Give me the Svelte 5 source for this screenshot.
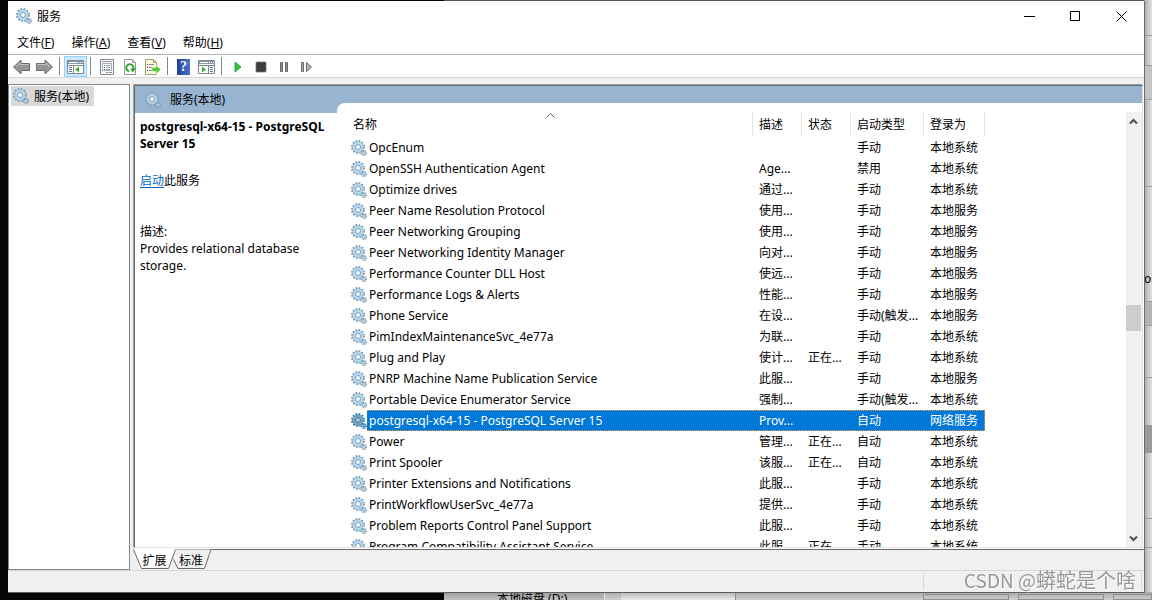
<script>
const menus = [
    { label: '文件', key: 'F' },
    { label: '操作', key: 'A' },
    { label: '查看', key: 'V' },
    { label: '帮助', key: 'H' },
];

const columns = ['描述', '状态', '启动类型', '登录为'];

const services = [
    { name: 'OpcEnum', desc: '', status: '', startup: '手动', logon: '本地系统' },
    { name: 'OpenSSH Authentication Agent', desc: 'Age...', status: '', startup: '禁用', logon: '本地系统' },
    { name: 'Optimize drives', desc: '通过...', status: '', startup: '手动', logon: '本地系统' },
    { name: 'Peer Name Resolution Protocol', desc: '使用...', status: '', startup: '手动', logon: '本地服务' },
    { name: 'Peer Networking Grouping', desc: '使用...', status: '', startup: '手动', logon: '本地服务' },
    { name: 'Peer Networking Identity Manager', desc: '向对...', status: '', startup: '手动', logon: '本地服务' },
    { name: 'Performance Counter DLL Host', desc: '使远...', status: '', startup: '手动', logon: '本地服务' },
    { name: 'Performance Logs & Alerts', desc: '性能...', status: '', startup: '手动', logon: '本地服务' },
    { name: 'Phone Service', desc: '在设...', status: '', startup: '手动(触发...', logon: '本地服务' },
    { name: 'PimIndexMaintenanceSvc_4e77a', desc: '为联...', status: '', startup: '手动', logon: '本地系统' },
    { name: 'Plug and Play', desc: '使计...', status: '正在...', startup: '手动', logon: '本地系统' },
    { name: 'PNRP Machine Name Publication Service', desc: '此服...', status: '', startup: '手动', logon: '本地服务' },
    { name: 'Portable Device Enumerator Service', desc: '强制...', status: '', startup: '手动(触发...', logon: '本地系统' },
    { name: 'postgresql-x64-15 - PostgreSQL Server 15', desc: 'Prov...', status: '', startup: '自动', logon: '网络服务' },
    { name: 'Power', desc: '管理...', status: '正在...', startup: '自动', logon: '本地系统' },
    { name: 'Print Spooler', desc: '该服...', status: '正在...', startup: '自动', logon: '本地系统' },
    { name: 'Printer Extensions and Notifications', desc: '此服...', status: '', startup: '手动', logon: '本地系统' },
    { name: 'PrintWorkflowUserSvc_4e77a', desc: '提供...', status: '', startup: '手动', logon: '本地系统' },
    { name: 'Problem Reports Control Panel Support', desc: '此服...', status: '', startup: '手动', logon: '本地系统' },
    { name: 'Program Compatibility Assistant Service', desc: '此服...', status: '正在...', startup: '手动', logon: '本地系统' },
];

let selected = $state(13);
let tab = $state('扩展');

// share of the scroll track above and below the thumb
const above = 175;
const below = 199;
</script>

{#snippet gears(faded)}
    <svg class="gears" class:faded width="16" height="16" viewBox="0 0 16 16" aria-hidden="true">
        <circle cx="7" cy="7" r="6" fill="none" stroke="#6f95b1" stroke-width="2" stroke-dasharray="1.6 1.54" />
        <circle cx="7" cy="7" r="4" fill="#fff" stroke="#b9d9ee" stroke-width="3" />
        <circle cx="7" cy="7" r="5.4" fill="none" stroke="#8fb0c8" stroke-width=".7" />
        <circle cx="7" cy="7" r="2.5" fill="#fff" stroke="#6d8fac" stroke-width=".9" />
        <circle cx="13" cy="13" r="2.4" fill="none" stroke="#6f93ae" stroke-width="1.3" stroke-dasharray="1 .88" />
        <circle cx="13" cy="13" r="1.4" fill="#e4f0f8" stroke="#8fb2cb" stroke-width="1.1" />
    </svg>
{/snippet}

{#snippet arrow(flip)}
    <svg width="17" height="16" viewBox="0 0 17 16" aria-hidden="true">
        <path
            d="M.5 8 8 1V4.500h8.500v7H8V15z"
            transform={flip ? 'matrix(-1 0 0 1 17 0)' : undefined}
            fill="#959595" stroke="#6c6c6c" stroke-linejoin="round" />
        <path
            d="M3 8 7 4V5.500h8.500"
            transform={flip ? 'matrix(-1 0 0 1 17 0)' : undefined}
            fill="none" stroke="#c4c4c4" />
    </svg>
{/snippet}

{#snippet panes(right)}
    <svg width="17" height="16" viewBox="0 0 17 16" aria-hidden="true">
        <path d="M.5 1.5h16v13H.5z" fill="#fff" stroke="#7d8893" />
        <path d="M1 2h15v3H1z" fill="#8b98a6" />
        <path d="M2 3.5h8M11 3.5h1M13 3.5h1M15 3.5h1" stroke="#fff" />
        <path d="M1 6.5h15" stroke="#7d8893" />
        {#if right}
            <path d="M10.5 7v7" stroke="#7d8893" />
            <path d="M12 8.5h3M12 10.5h3M12 12.5h3" stroke="#5a7ca8" />
            <path d="M4 7.5v6L8 10.5z" fill="#3ab52c" />
        {:else}
            <path d="M6.5 7v7" stroke="#7d8893" />
            <path d="M2 8.5h3M2 10.5h3M2 12.5h3" stroke="#5a7ca8" />
            <path d="M12 7.5v6L8 10.5z" fill="#3ab52c" />
        {/if}
    </svg>
{/snippet}

<div class="desktop">
    <!-- windows lying behind the console -->
    <div class="behind" aria-hidden="true">
        <div class="side">
            <i class="s1"></i><i class="s2"></i><i class="s3"></i><i class="s4"></i>
            <i class="s5"><b>os</b></i><i class="s6"></i><i class="s7"></i><i class="s8"></i>
            <i class="s9"></i><i class="s10"></i><i class="s11"></i>
        </div>
        <div class="foot">
            <span class="drive">本地磁盘 (D:)</span>
            <span class="edge"></span>
            <span class="pale"></span>
            <span class="boxes"><i></i><i></i><i></i></span>
        </div>
    </div>

    <main class="window">
        <header class="titlebar">
            {@render gears(false)}
            <h1>服务</h1>
            <div class="controls">
                <button aria-label="最小化"><svg width="11" height="11"><path d="M0 5.5h11" stroke="#000" /></svg></button>
                <button aria-label="最大化"><svg width="11" height="11"><path d="M.5.5h9v9h-9z" fill="none" stroke="#000" /></svg></button>
                <button aria-label="关闭"><svg width="11" height="11"><path d="M.5.5l10 10M10.500.5l-10 10" stroke="#000" /></svg></button>
            </div>
        </header>

        <nav class="menubar">
            {#each menus as m}
                <button>{m.label}(<u>{m.key}</u>)</button>
            {/each}
        </nav>

        <div class="toolbar" role="toolbar">
            <button aria-label="后退">{@render arrow(false)}</button>
            <button aria-label="前进">{@render arrow(true)}</button>
            <span class="sep"></span>
            <button class="on" aria-label="显示/隐藏控制台树">{@render panes(false)}</button>
            <span class="sep"></span>
            <button aria-label="属性">
                <svg width="16" height="16" viewBox="0 0 16 16">
                    <path d="M1.500.5h13v15h-13z" fill="#fafafa" stroke="#82878c" />
                    <path d="M3 2.500h10" stroke="#8b98a6" />
                    <path d="M3.500 4.500h9v7h-9z" fill="#fff" stroke="#a3a9af" />
                    <path d="M5 6.500h1M5 8.500h1M5 10.500h1" stroke="#3f74b5" />
                    <path d="M7 6.500h4M7 8.500h4M7 10.500h4" stroke="#9aa0a6" />
                    <path d="M7 13.500h2M10 13.500h3" stroke="#82878c" />
                </svg>
            </button>
            <button aria-label="刷新">
                <svg width="16" height="16" viewBox="0 0 16 16">
                    <path d="M2.500.5h8l3 3v12h-11z" fill="#fdfdfd" stroke="#979797" />
                    <path d="M10.500.5v3h3" fill="none" stroke="#979797" />
                    <path d="M7 12.300A3.600 3.600 0 1 1 11.300 10" fill="none" stroke="#2fa82f" stroke-width="2" />
                    <path d="M8 9.500h5.500L11 13.500z" fill="#2fa82f" />
                </svg>
            </button>
            <button aria-label="导出列表">
                <svg width="16" height="16" viewBox="0 0 16 16">
                    <path d="M.5.5h8l3 3v12H.5z" fill="#fdf8dc" stroke="#a39a77" />
                    <path d="M8.500.5v3h3" fill="none" stroke="#a39a77" />
                    <path d="M2 5.500h1M2 8.500h1M2 11.500h1" stroke="#444" />
                    <path d="M4 5.500h5M4 8.500h4M4 11.500h4" stroke="#8d8da8" />
                    <path d="M7 8.500h4V6l5 4.500-5 4.500v-2.500H7z" fill="#54c93b" stroke="#fff" stroke-width=".5" />
                </svg>
            </button>
            <span class="sep"></span>
            <button class="help" aria-label="帮助"><span>?</span></button>
            <button aria-label="显示/隐藏操作窗格">{@render panes(true)}</button>
            <span class="sep"></span>
            <button aria-label="启动服务">
                <svg width="16" height="16"><path d="M5 3v10l6-5z" fill="#2fc52f" stroke="#1c9c2a" stroke-width=".8" /></svg>
            </button>
            <button aria-label="停止服务">
                <svg width="16" height="16"><rect x="3" y="3" width="10" height="10" rx="1" fill="#3d3d3d" stroke="#6e6e6e" stroke-width=".8" /></svg>
            </button>
            <button aria-label="暂停服务">
                <svg width="16" height="16"><path d="M4.500 3.500h2v9h-2zM9.500 3.500h2v9h-2z" fill="#8c8c8c" stroke="#6a6a6a" /></svg>
            </button>
            <button aria-label="重启动服务">
                <svg width="16" height="16"><path d="M2.500 3.500h2v9h-2zM7.500 3.500v9l5-4.500z" fill="#b4b4b4" stroke="#6a6a6a" /></svg>
            </button>
        </div>

        <div class="body">
            <aside class="tree">
                <button class="node">{@render gears(false)}<span>服务(本地)</span></button>
            </aside>

            <section class="right">
                <div class="pane">
                    <div class="info">
                        <div class="info-head">{@render gears(true)}<h2>服务(本地)</h2></div>
                        <div class="info-body">
                            <h3>postgresql-x64-15 - PostgreSQL Server 15</h3>
                            <p class="action"><a href="#start">启动</a>此服务</p>
                            <p>描述:</p>
                            <p>Provides relational database storage.</p>
                        </div>
                    </div>

                    <div class="list">
                        <div class="scroller">
                            <table>
                                <thead>
                                    <tr>
                                        <th class="c-name">
                                            名称
                                            <svg class="sort" width="9" height="5"><path d="M.5 4.500l4-4 4 4" fill="none" stroke="#5c5c5c" /></svg>
                                        </th>
                                        {#each columns as c, i}
                                            <th class="c{i}">{c}</th>
                                        {/each}
                                    </tr>
                                </thead>
                                <tbody>
                                    {#each services as s, i}
                                        <tr class:selected={i === selected} onclick={() => selected = i}>
                                            <td class="name">
                                                <div>{@render gears(false)}<span>{s.name}</span></div>
                                            </td>
                                            <td>{s.desc}</td>
                                            <td>{s.status}</td>
                                            <td>{s.startup}</td>
                                            <td>{s.logon}</td>
                                        </tr>
                                    {/each}
                                </tbody>
                            </table>
                        </div>
                        <div class="scrollbar">
                            <button aria-label="向上滚动"><svg width="9" height="7"><path d="M1 5.500l3.500-3.500 3.500 3.500" fill="none" stroke="#505050" stroke-width="2" /></svg></button>
                            <div style="flex-grow: {above}"></div>
                            <div class="thumb"></div>
                            <div style="flex-grow: {below}"></div>
                            <button aria-label="向下滚动"><svg width="9" height="7"><path d="M1 1.500l3.500 3.500 3.500-3.500" fill="none" stroke="#505050" stroke-width="2" /></svg></button>
                        </div>
                    </div>
                </div>

                <div class="tabs">
                    <svg class="tab-shapes" width="80" height="21" viewBox="0 0 80 21" aria-hidden="true">
                        <path d="M41 10l4 9.500h26.500L78 .5H42z" fill="#f0f0f0" />
                        <path d="M40.500 10.500l4.500 9h26.500L78 .5" fill="none" stroke="#696969" />
                        <path d="M0 0l8.500 19.500h27L43 0z" fill="#fff" />
                        <path d="M.5.5l8 19h27l7-19" fill="none" stroke="#696969" />
                    </svg>
                    <button class="wide" onclick={() => tab = '扩展'} aria-pressed={tab === '扩展'}>扩展</button>
                    <button onclick={() => tab = '标准'} aria-pressed={tab === '标准'}>标准</button>
                </div>
            </section>
        </div>

        <footer class="status"><span></span></footer>
    </main>

    <div class="watermark"><span>CSDN @</span>蟒蛇是个啥</div>
</div>

<style>
    :global(body) {
        margin: 0;
        overflow: hidden;
    }

    .desktop {
        position: relative;
        display: flex;
        box-sizing: border-box;
        height: 100vh;
        padding: 1px 7px 7px 8px;
        background: #060606;
        font: 12px/17px "Noto Sans", "Noto Sans CJK SC", sans-serif;
        color: #000;
    }

    button {
        margin: 0;
        padding: 0;
        border: 0;
        background: none;
        font: inherit;
        color: inherit;
    }

    h1, h2, h3, p {
        margin: 0;
        font-size: 12px;
        font-weight: 400;
    }

    svg {
        display: block;
        flex: none;
    }

    /* background windows */
    .behind {
        position: absolute;
        inset: 0 0 0 444px;
        background: #555;
        overflow: hidden;
    }

    .side {
        position: absolute;
        inset: 0 0 0 auto;
        width: 8px;
        display: flex;
        flex-direction: column;
        background: linear-gradient(90deg, #aaa, #e2e2e2);
    }

    .side i {
        box-sizing: border-box;
        border-bottom: 1px solid #a0a0a0;
        font-style: normal;
    }

    .side b {
        font-weight: 400;
        font-size: 12px;
    }

    .s1 { height: 36px; }
    .s2 { height: 30px; }
    .s3 { height: 34px; background: #c4c4c4; }
    .s4 { height: 87px; }
    .s5 { height: 115px; padding-top: 83px; }
    .s6 { height: 24px; background: #b4b4b4; }
    .s7 { height: 52px; }
    .s8 { height: 48px; }
    .s9 { height: 27px; background: #999; }
    .s10 { height: 66px; }
    .s11 { height: 29px; }

    .foot {
        position: absolute;
        inset: auto 0 0 0;
        height: 8px;
        display: flex;
        background: linear-gradient(#9a9a9a, #c2c2c2);
        overflow: hidden;
    }

    .drive {
        width: 107px;
        padding-left: 53px;
        line-height: 14px;
        white-space: nowrap;
    }

    .edge {
        width: 16px;
        border-left: 1px solid #e6e6e6;
        background: linear-gradient(#aaa, #d0d0d0);
    }

    .pale {
        width: 114px;
        border-right: 1px solid #8a8a8a;
        background: linear-gradient(#b4b4b4, #eaeaea);
    }

    .boxes {
        flex: 1;
        display: flex;
        justify-content: flex-end;
        gap: 9px;
        padding-top: 2px;
        background: linear-gradient(#aaa, #cfcfcf);
    }

    .boxes i {
        box-sizing: border-box;
        width: 86px;
        border: 1px solid #8f8f8f;
    }

    .boxes i:last-child {
        width: 39px;
    }

    /* console window */
    .window {
        position: relative;
        flex: 1;
        min-width: 0;
        display: flex;
        flex-direction: column;
        border-right: 1px solid #6b6b6b;
        border-bottom: 1px solid #5a5f5c;
        background: #f0f0f0;
    }

    .titlebar {
        display: flex;
        align-items: center;
        gap: 5px;
        height: 30px;
        padding-left: 8px;
        background: #fff;
    }

    .controls {
        display: flex;
        margin-left: auto;
    }

    .controls button {
        display: flex;
        align-items: center;
        justify-content: center;
        width: 46px;
        height: 30px;
    }

    .menubar {
        display: flex;
        height: 23px;
        border-bottom: 1px solid #b4b4b4;
        background: #fff;
    }

    .menubar button {
        padding: 0 8px 0 9px;
    }

    .toolbar {
        display: flex;
        align-items: flex-end;
        height: 22px;
        padding-left: 2px;
        border-bottom: 1px solid #d9d9d9;
        background: #fff;
    }

    .toolbar button {
        box-sizing: border-box;
        display: flex;
        align-items: center;
        justify-content: center;
        width: 23px;
        height: 21px;
    }

    .toolbar .on {
        border: 1px solid #99d1ff;
        background: #cce8ff;
    }

    .toolbar .sep {
        width: 1px;
        height: 18px;
        margin: 0 4px 2px 3px;
        background: #868686;
    }

    .help span {
        width: 13px;
        height: 16px;
        background: linear-gradient(90deg, #1d3f94, #4a76cf);
        color: #fff;
        font: bold 14px/16px "Liberation Serif", serif;
    }

    .body {
        flex: 1;
        min-height: 0;
        display: grid;
        grid-template: minmax(0, 1fr) / 122px minmax(0, 1fr);
        column-gap: 3px;
        padding-top: 6px;
    }

    .tree {
        padding: 1px 2px;
        border: 1px solid #828790;
        background: #fff;
    }

    .node {
        display: flex;
        align-items: center;
        gap: 5px;
        height: 20px;
        padding: 0 5px 0 2px;
        background: #d9d9d9;
    }

    .right {
        display: flex;
        flex-direction: column;
        min-height: 0;
    }

    .pane {
        flex: 1;
        min-height: 0;
        display: grid;
        grid-template: minmax(0, 1fr) / 202px minmax(0, 1fr);
        margin: 1px;
        border: 1px solid #696969;
        border-right-color: #e3e3e3;
        border-bottom-color: #e3e3e3;
        box-shadow: -1px -1px 0 #a0a0a0, 1px 1px 0 #fff;
        background: #99b4d1;
    }

    .info {
        display: flex;
        flex-direction: column;
    }

    .info-head {
        display: flex;
        align-items: center;
        gap: 9px;
        height: 27px;
        padding-left: 10px;
    }

    .info-body {
        flex: 1;
        padding: 5px 0 0 5px;
        background: #fff;
    }

    h3 {
        font-weight: 700;
    }

    .action {
        margin: 20px 0 34px;
    }

    a {
        color: #0066cc;
        text-underline-offset: 2px;
    }

    .list {
        display: flex;
        min-height: 0;
        margin-top: 17px;
        padding-top: 9px;
        border-top-left-radius: 8px;
        background: #fff;
    }

    .scroller {
        flex: 1;
        min-width: 0;
        padding-left: 8px;
        overflow: hidden;
    }

    table {
        table-layout: fixed;
        width: 640px;
        border-collapse: separate;
        border-spacing: 0;
    }

    th {
        position: relative;
        box-sizing: border-box;
        height: 25px;
        padding: 0 0 0 6px;
        border-right: 1px solid #e5e5e5;
        font-weight: 400;
        text-align: left;
        white-space: nowrap;
    }

    .c-name {
        width: 408px;
        padding-left: 8px;
    }

    .c0, .c1 { width: 49px; }
    .c2 { width: 73px; }
    .c3 { width: 61px; }

    .sort {
        position: absolute;
        top: 1px;
        left: calc(50% - 3px);
    }

    td {
        box-sizing: border-box;
        height: 21px;
        padding: 0 0 0 6px;
        line-height: 19px;
        white-space: nowrap;
    }

    .name div {
        display: flex;
        align-items: center;
    }

    .name span {
        flex: 1;
        padding-left: 2px;
        border: 1px solid transparent;
        border-width: 1px 0;
    }

    .selected td {
        color: #fff;
    }

    .selected .name span,
    .selected td:not(.name) {
        border: 1px dotted #f09a4c;
        border-width: 1px 0;
        background: #0078d7;
    }

    .selected td:last-child {
        border-right-width: 1px;
    }

    .selected .gears {
        filter: brightness(.75) saturate(2.2);
    }

    .faded {
        opacity: .85;
    }

    .scrollbar {
        display: flex;
        flex-direction: column;
        width: 16px;
        background: #f0f0f0;
    }

    .scrollbar button {
        display: flex;
        align-items: center;
        justify-content: center;
        width: 15px;
        height: 18px;
    }

    .thumb {
        width: 15px;
        height: 26px;
        background: #cdcdcd;
    }

    .tabs {
        position: relative;
        display: flex;
        height: 20px;
        border-top: 1px solid #696969;
    }

    .tab-shapes {
        position: absolute;
        top: -1px;
        left: 0;
    }

    .tabs button {
        position: relative;
        width: 30px;
    }

    .tabs .wide {
        width: 43px;
    }

    .status {
        box-sizing: border-box;
        display: flex;
        justify-content: flex-end;
        height: 22px;
        padding: 1px 2px 2px 0;
        border-top: 1px solid #d7d7d7;
    }

    .status span {
        width: 217px;
        border: 1px solid #d7d7d7;
        border-width: 0 1px;
    }

    .watermark {
        position: absolute;
        right: 16px;
        bottom: 8px;
        color: #8f8f8f;
        font: 20px/24px "Noto Sans CJK SC", sans-serif;
        text-shadow: 1px 1px 0 #fff;
        opacity: .9;
    }

    .watermark span {
        font-size: 19px;
    }
</style>
